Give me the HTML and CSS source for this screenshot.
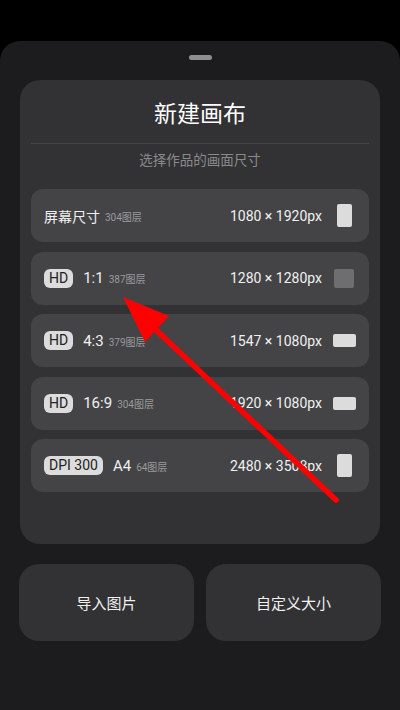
FILE: index.html
```html
<!DOCTYPE html>
<html lang="zh-CN">

<head>
    <meta charset="UTF-8">
    <meta name="viewport" content="width=device-width, initial-scale=1.0">
    <title>新建画布</title>
    <link rel="stylesheet" href="styles.css">
</head>

<body>
    <div class="sheet">
        <div class="handle"></div>

        <div class="canvas-card">
            <h1>新建画布</h1>
            <p class="subtitle">选择作品的画面尺寸</p>

            <div class="size-list">
                <div class="size-row">
                    <div class="size-name">
                        <span class="label">屏幕尺寸</span>
                        <span class="layers">304图层</span>
                    </div>
                    <span class="px">1080 × 1920px</span>
                    <div class="shape-box"><div class="shape tall"></div></div>
                </div>
                <div class="size-row">
                    <div class="size-name">
                        <span class="badge">HD</span>
                        <span class="ratio">1:1</span>
                        <span class="layers">387图层</span>
                    </div>
                    <span class="px">1280 × 1280px</span>
                    <div class="shape-box"><div class="shape square"></div></div>
                </div>
                <div class="size-row">
                    <div class="size-name">
                        <span class="badge">HD</span>
                        <span class="ratio">4:3</span>
                        <span class="layers">379图层</span>
                    </div>
                    <span class="px">1547 × 1080px</span>
                    <div class="shape-box"><div class="shape wide"></div></div>
                </div>
                <div class="size-row">
                    <div class="size-name">
                        <span class="badge">HD</span>
                        <span class="ratio">16:9</span>
                        <span class="layers">304图层</span>
                    </div>
                    <span class="px">1920 × 1080px</span>
                    <div class="shape-box"><div class="shape wide"></div></div>
                </div>
                <div class="size-row">
                    <div class="size-name">
                        <span class="badge">DPI 300</span>
                        <span class="ratio">A4</span>
                        <span class="layers">64图层</span>
                    </div>
                    <span class="px">2480 × 3508px</span>
                    <div class="shape-box"><div class="shape tall"></div></div>
                </div>
            </div>
        </div>

        <div class="actions">
            <button>导入图片</button>
            <button>自定义大小</button>
        </div>
    </div>

    <!-- red annotation arrow drawn over the list -->
    <svg class="arrow" width="400" height="710" viewBox="0 0 400 710">
        <line x1="155" y1="329" x2="336" y2="500" stroke="#ff0000" stroke-width="5.5" stroke-linecap="round" />
        <polygon points="123,297 169,316 145,342" fill="#ff0000" />
    </svg>
</body>

</html>
```

FILE: styles.css
```css
body {
    font-family: Roboto, "Noto Sans CJK SC", sans-serif;
    background-color: #000;
    margin: 0;
    color: #eee;
    width: 400px;
    height: 710px;
    overflow: hidden;
    position: relative;
}

.sheet {
    margin-top: 41px;
    background-color: #1c1c1e;
    border-radius: 20px 20px 0 0;
    height: 669px;
    padding: 0 20px;
    box-sizing: border-box;
    overflow: hidden;
}

.handle {
    width: 23px;
    height: 5px;
    border-radius: 3px;
    background-color: #8e8e8e;
    margin: 14px auto 0;
}

.canvas-card {
    margin-top: 20px;
    background-color: #323234;
    border-radius: 20px;
    padding: 0 11px 52px;
}

.canvas-card h1 {
    margin: 0;
    padding-top: 20px;
    height: 64px;
    line-height: 30px;
    font-size: 23px;
    font-weight: 400;
    text-align: center;
    color: #fff;
    border-bottom: 1px solid #454547;
    box-sizing: border-box;
}

.subtitle {
    margin: 0;
    height: 45px;
    line-height: 32px;
    font-size: 13.5px;
    text-align: center;
    color: #8a8a8c;
}

.size-list {
    display: flex;
    flex-direction: column;
    gap: 9.5px;
}

.size-row {
    height: 53px;
    background-color: #444446;
    border-radius: 12px;
    display: flex;
    align-items: center;
    padding: 0 13px;
}

.size-name {
    flex: 1;
    display: flex;
    align-items: center;
}

.label {
    font-size: 14px;
    color: #f0f0f0;
}

.ratio {
    font-size: 15px;
    color: #f0f0f0;
    margin-left: 10px;
}

.layers {
    font-size: 10px;
    color: #9a9a9c;
    margin-left: 5px;
    margin-top: 1px;
}

.badge {
    background-color: #dcdcdc;
    color: #222;
    font-size: 14px;
    height: 19px;
    line-height: 19px;
    padding: 0 5px;
    border-radius: 6px;
}

.px {
    font-size: 14px;
    color: #f0f0f0;
}

.shape-box {
    width: 24px;
    margin-left: 10px;
    display: flex;
    justify-content: center;
}

.shape {
    background-color: #dcdcdc;
    border-radius: 2px;
}

.shape.tall {
    width: 15px;
    height: 23px;
}

.shape.square {
    width: 20px;
    height: 19px;
    background-color: #6e6e70;
}

.shape.wide {
    width: 23px;
    height: 13px;
}

.actions {
    display: flex;
    gap: 12px;
    margin-top: 20px;
    margin-left: -1px;
    margin-right: -1px;
}

.actions button {
    flex: 1;
    height: 77px;
    background-color: #323234;
    border: none;
    border-radius: 20px;
    color: #f0f0f0;
    font-family: "Noto Sans CJK SC", sans-serif;
    font-size: 15px;
}

.arrow {
    position: absolute;
    top: 0;
    left: 0;
    pointer-events: none;
}
```
